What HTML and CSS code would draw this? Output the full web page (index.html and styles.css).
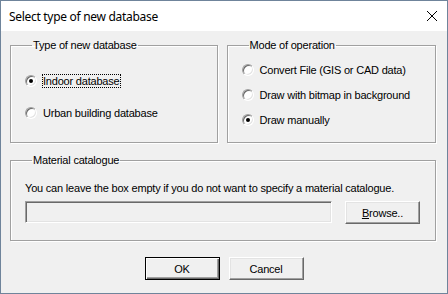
FILE: index.html
```html
<!DOCTYPE html>
<html lang="en">

<head>
    <meta charset="UTF-8">
    <title>Select type of new database</title>
    <link rel="stylesheet" href="styles.css">
</head>

<body>
    <div class="window">
        <div class="titlebar">
            <span class="title">Select type of new database</span>
            <svg class="close" width="12" height="12" viewBox="0 0 12 12">
                <path d="M1 1 L11 11 M11 1 L1 11" stroke="#000" stroke-width="1" fill="none"/>
            </svg>
        </div>
        <div class="client">
            <div class="top-row">
                <fieldset class="group group-type">
                    <legend>Type of new database</legend>
                    <label class="radio-row">
                        <input type="radio" name="dbtype" checked>
                        <span class="focus">Indoor database</span>
                    </label>
                    <label class="radio-row">
                        <input type="radio" name="dbtype">
                        <span>Urban building database</span>
                    </label>
                </fieldset>
                <fieldset class="group group-mode">
                    <legend>Mode of operation</legend>
                    <label class="radio-row">
                        <input type="radio" name="mode">
                        <span>Convert File (GIS or CAD data)</span>
                    </label>
                    <label class="radio-row">
                        <input type="radio" name="mode">
                        <span>Draw with bitmap in background</span>
                    </label>
                    <label class="radio-row">
                        <input type="radio" name="mode" checked>
                        <span>Draw manually</span>
                    </label>
                </fieldset>
            </div>
            <fieldset class="group group-material">
                <legend>Material catalogue</legend>
                <p class="hint">You can leave the box empty if you do not want to specify a material catalogue.</p>
                <div class="file-row">
                    <input type="text" class="textbox">
                    <button class="btn"><u>B</u>rowse..</button>
                </div>
            </fieldset>
            <div class="actions">
                <button class="btn btn-default">OK</button>
                <button class="btn">Cancel</button>
            </div>
        </div>
    </div>
</body>

</html>
```

FILE: styles.css
```css
body {
    margin: 0;
    font-family: "Liberation Sans", Arial, sans-serif;
    font-size: 11px;
    letter-spacing: -0.2px;
    color: #000;
}

.window {
    width: 448px;
    height: 294px;
    box-sizing: border-box;
    border: 1px solid #6f849b;
    display: flex;
    flex-direction: column;
    background-color: #f0f0f0;
}

.titlebar {
    height: 30px;
    background-color: #fff;
    display: flex;
    align-items: center;
    justify-content: space-between;
    padding: 0 9px 0 8px;
}

.title {
    font-family: "Noto Sans", "Open Sans", sans-serif;
    font-size: 12px;
    letter-spacing: -0.3px;
}

.client {
    flex: 1;
    padding: 8px 11px 0 9px;
}

.top-row {
    display: flex;
    gap: 9px;
}

.group {
    margin: 0;
    min-width: 0;
    border: 1px solid #a0a0a0;
    box-shadow: inset 1px 1px #fff, 1px 1px #fff;
    padding: 0;
}

.group legend {
    padding: 0 1px;
    margin-left: 7px;
    line-height: 13px;
}

.group-type {
    width: 208px;
    height: 104px;
    box-sizing: border-box;
    padding: 22px 0 0 14px;
}

.group-mode {
    width: 210px;
    height: 104px;
    box-sizing: border-box;
    padding: 11px 0 0 14px;
}

.group-type .radio-row {
    margin-bottom: 19px;
}

.group-mode .radio-row {
    margin-bottom: 12px;
}

.radio-row {
    display: flex;
    align-items: center;
    height: 13px;
}

.radio-row input {
    appearance: none;
    margin: 0 6px 0 0;
    width: 12px;
    height: 12px;
    border-radius: 50%;
    border: 1px solid;
    border-color: #a0a0a0 #fff #fff #a0a0a0;
    box-shadow: inset 1px 1px #696969, inset -1px -1px #e3e3e3;
    background-color: #fff;
    position: relative;
}

.radio-row input:checked::after {
    content: "";
    position: absolute;
    left: 3px;
    top: 3px;
    width: 4px;
    height: 4px;
    border-radius: 50%;
    background-color: #000;
}

.focus {
    outline: 1px dotted #000;
    outline-offset: 0;
}

.group-material {
    margin-top: 11px;
    height: 87px;
    box-sizing: border-box;
    padding: 0 15px 0 14px;
}

.hint {
    margin: 15px 0 7px;
}

.file-row {
    display: flex;
    justify-content: space-between;
}

.textbox {
    width: 307px;
    height: 22px;
    box-sizing: border-box;
    margin: 0;
    border: 1px solid;
    border-color: #a0a0a0 #fff #fff #a0a0a0;
    box-shadow: inset 1px 1px #696969, inset -1px -1px #e3e3e3;
    background-color: #f0f0f0;
}

.btn {
    width: 75px;
    height: 23px;
    box-sizing: border-box;
    margin: 0;
    padding: 0;
    font-family: "Liberation Sans", Arial, sans-serif;
    font-size: 11px;
    letter-spacing: -0.2px;
    color: #000;
    background-color: #f0f0f0;
    border: 1px solid;
    border-color: #fff #696969 #696969 #fff;
    box-shadow: inset -1px -1px #a0a0a0, inset 1px 1px #e3e3e3;
}

.btn-default {
    border-color: #000;
    box-shadow: inset 1px 1px #fff, inset -1px -1px #696969, inset -2px -2px #a0a0a0;
}

.actions {
    display: flex;
    justify-content: center;
    gap: 9px;
    margin-top: 16px;
    padding-left: 2px;
}
```
